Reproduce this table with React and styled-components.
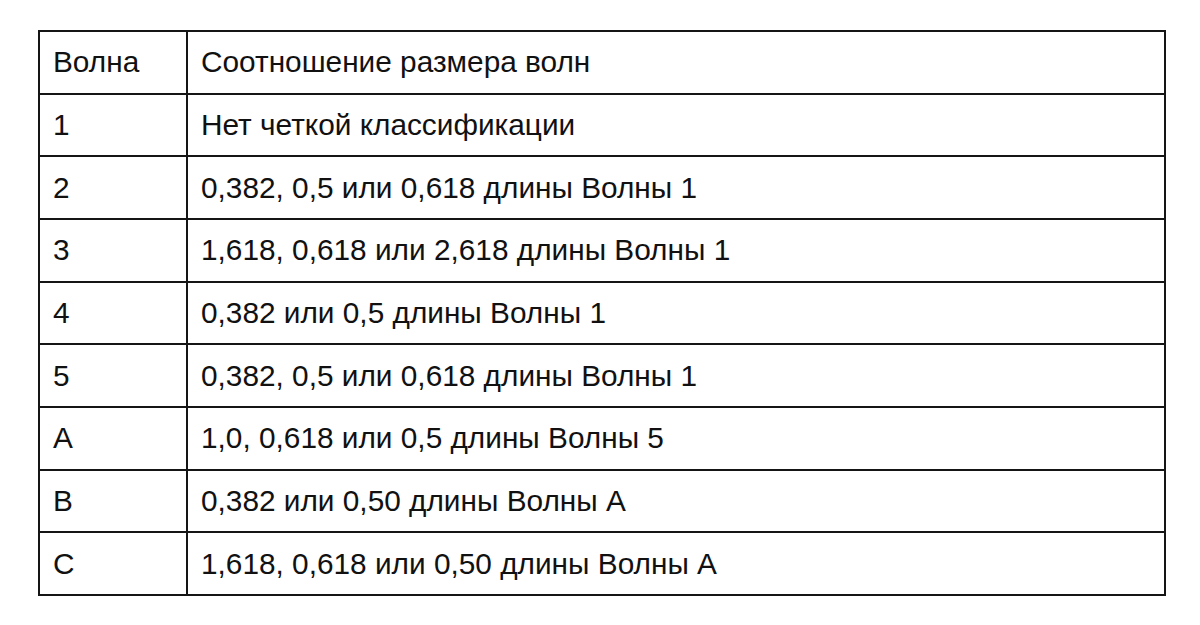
import React from 'react'
import styled, { createGlobalStyle } from 'styled-components'

const GlobalStyle = createGlobalStyle`
body {
  margin : 0;
  background : #fff;
}
`

const Page = styled.div`
padding : 30px 0 0 38px;
font-family : "Liberation Sans", Arial, sans-serif;
`

const Table = styled.table`
width : 1128px;
border-collapse : collapse;
border : 2px solid #151515;
color : #111;
font-size : 29.8px;
`

const Row = styled.tr`
height : 62.67px;
`

const Cell = styled.td`
border : 2px solid #151515;
padding : 0 13px;
vertical-align : middle;
text-align : left;
width : ${(props) => props.narrow ? '120px' : 'auto'};
`

const rows = [
  ['Волна', 'Соотношение размера волн'],
  ['1', 'Нет четкой классификации'],
  ['2', '0,382, 0,5 или 0,618 длины Волны 1'],
  ['3', '1,618, 0,618 или 2,618 длины Волны 1'],
  ['4', '0,382 или 0,5 длины Волны 1'],
  ['5', '0,382, 0,5 или 0,618 длины Волны 1'],
  ['A', '1,0, 0,618 или 0,5 длины Волны 5'],
  ['B', '0,382 или 0,50 длины Волны A'],
  ['C', '1,618, 0,618 или 0,50 длины Волны A'],
]

export default function App() {
  return (
    <Page>
      <GlobalStyle />
      <Table>
        <tbody>
          {rows.map(([wave, ratio]) => (
            <Row key={wave}>
              <Cell narrow>{wave}</Cell>
              <Cell>{ratio}</Cell>
            </Row>
          ))}
        </tbody>
      </Table>
    </Page>
  )
}
